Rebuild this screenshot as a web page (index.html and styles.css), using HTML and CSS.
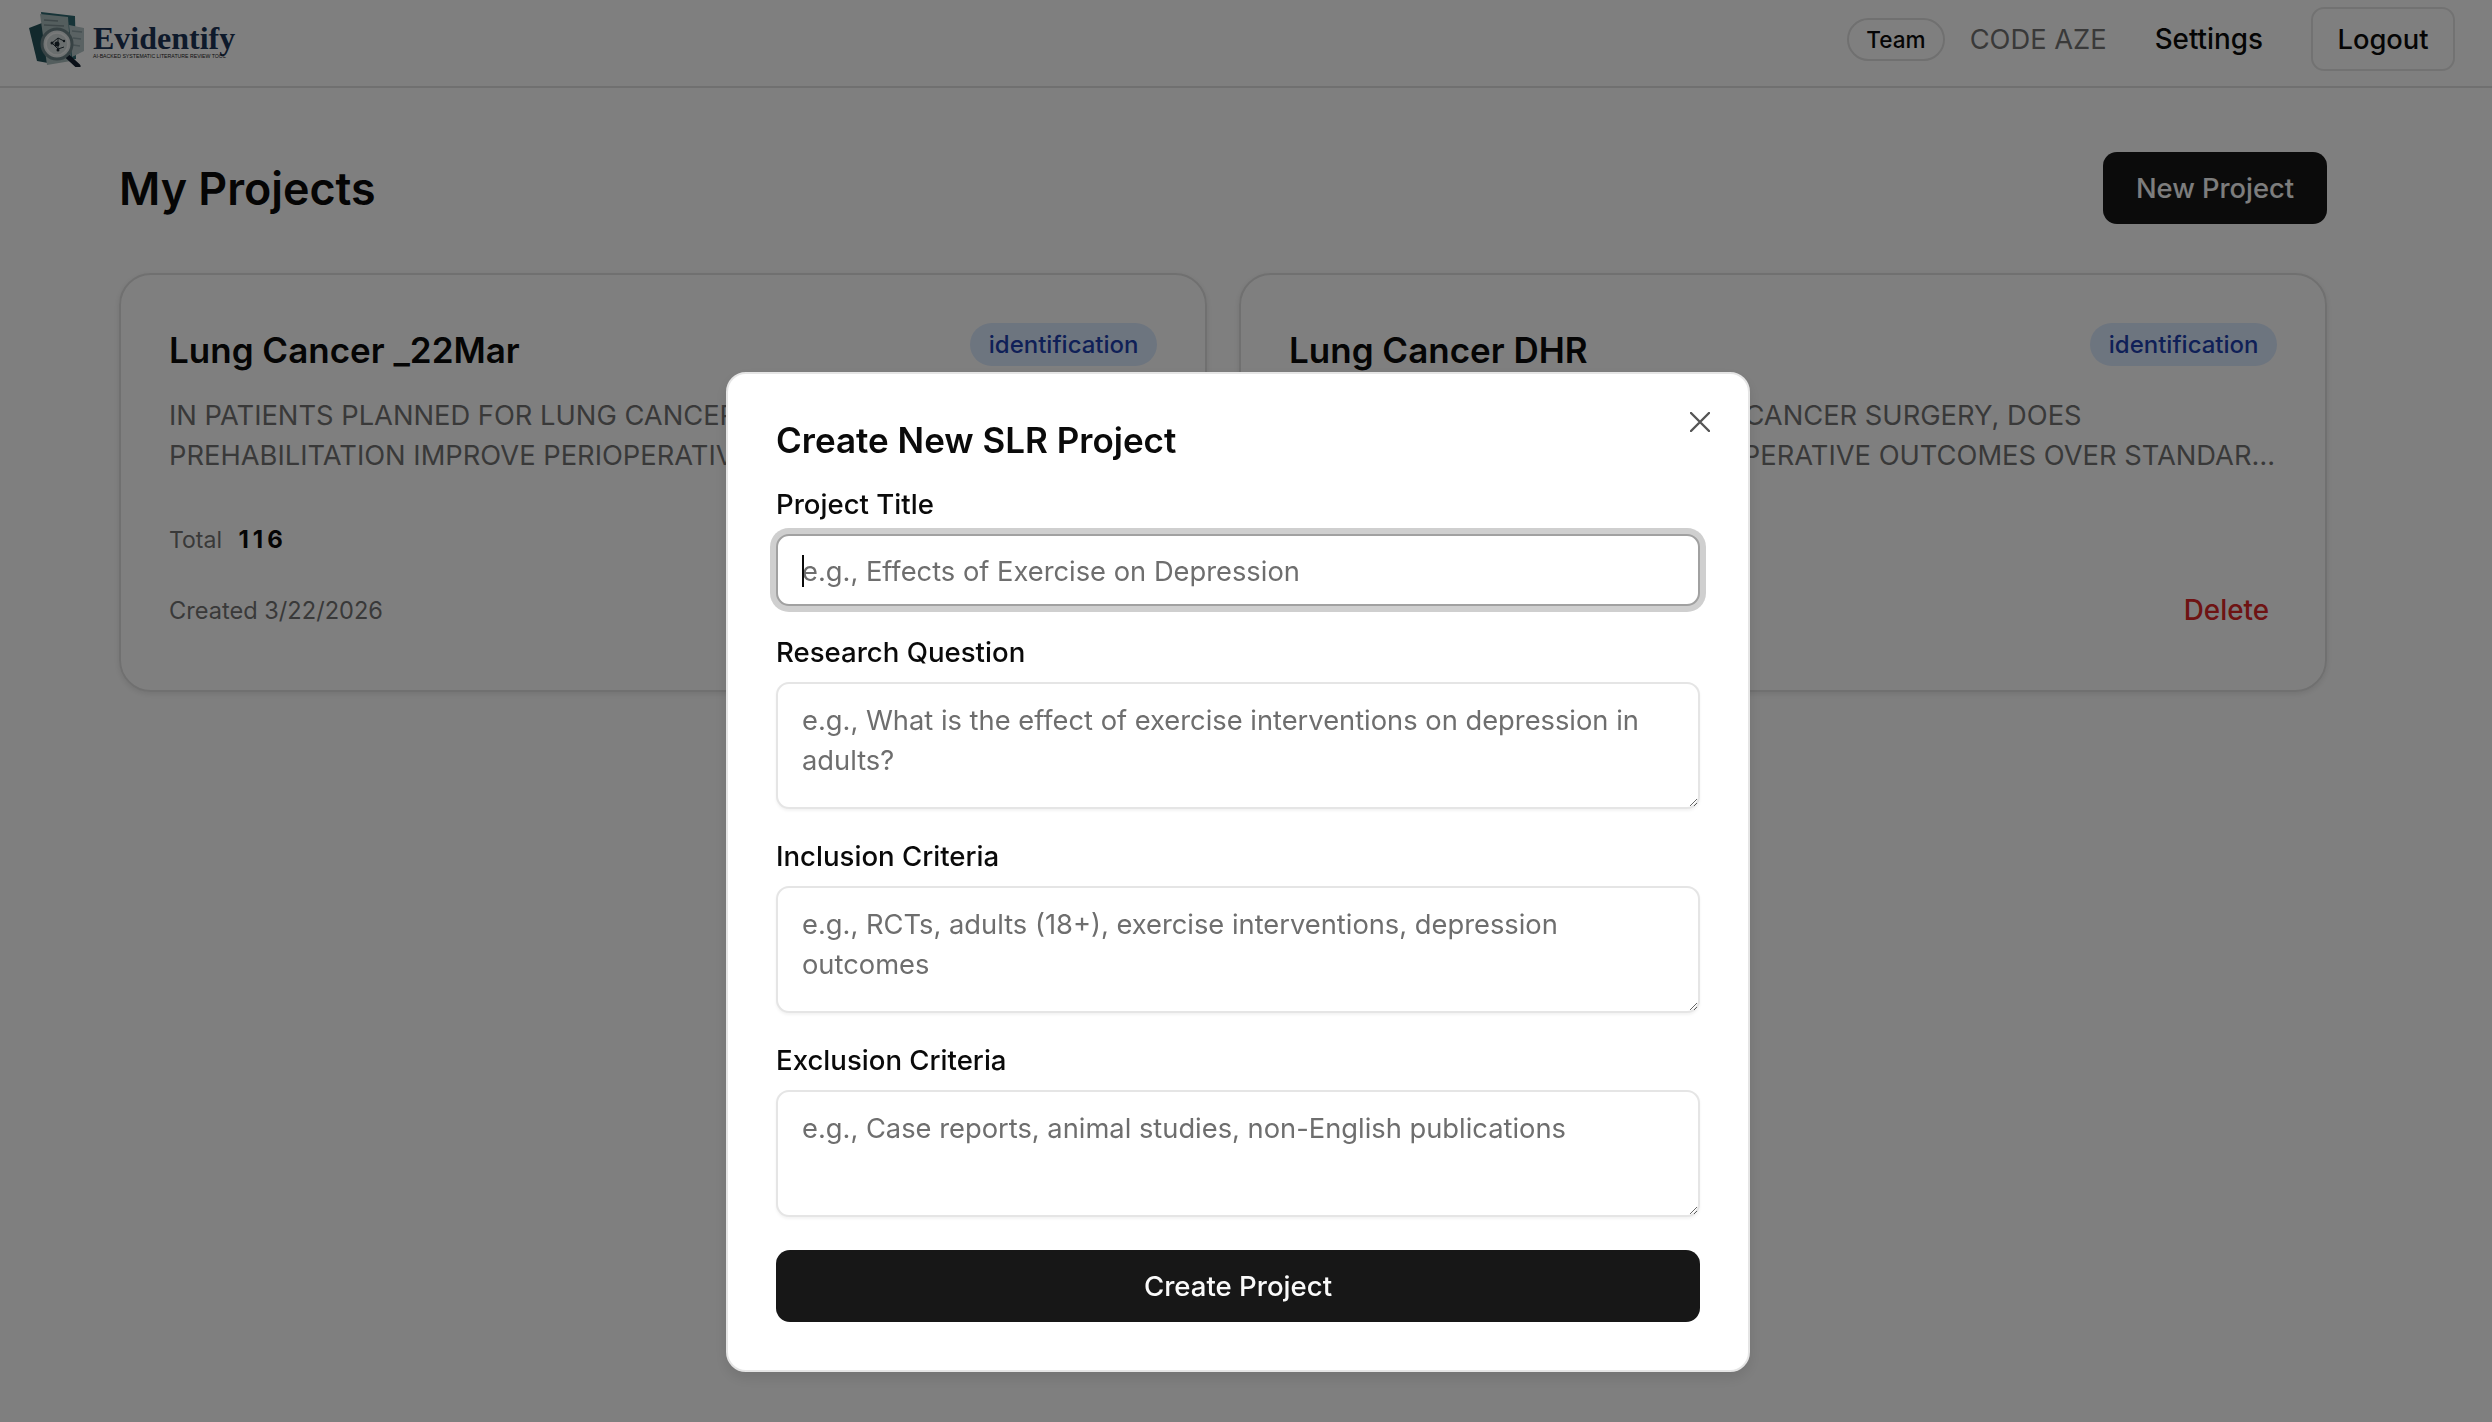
FILE: index.html
```html
<!DOCTYPE html>
<html>
<head>
  <title>Evidentify - My Projects</title>
  <link rel="stylesheet" href="styles.css">
</head>
<body>
  <nav class="navbar">
    <div class="brand">
      <svg class="brand-icon" viewBox="0 0 58 56" width="58" height="56">
        <path d="M1 17 L14 12 L20 52 L9 50 Z" fill="#24535a"/>
        <path d="M13 1 L47 5 L48 48 L20 52 Z" fill="#2f6870"/>
        <path d="M12 3 L40 6 L43 50 L19 54 Z" fill="#a9bcbc"/>
        <path d="M41 14 L56 17 L56 40 L44 46 Z" fill="#b4c4c6"/>
        <path d="M44 20 L54 21 M45 27 L53 28 M45 34 L52 35" stroke="#8a9ea2" stroke-width="1.5"/>
        <path d="M16 9 L30 10 M16 14 L36 15 M17 44 L22 45" stroke="#7c8f92" stroke-width="1.5"/>
        <path d="M38 44 L50 55" stroke="#142030" stroke-width="5" stroke-linecap="round"/>
        <circle cx="29" cy="33" r="15" fill="#e2e8e8" stroke="#6e8488" stroke-width="3"/>
        <circle cx="29" cy="33" r="11" fill="#d4dcdc" stroke="#f2f4f4" stroke-width="1.5"/>
        <path d="M24 32 L30 27 L36 30 M30 27 L30 38 M24 32 L30 38 L36 36" stroke="#26323a" stroke-width="1" fill="none"/>
        <circle cx="29" cy="33" r="2.5" fill="#1d2830"/>
        <circle cx="24" cy="32" r="1.5" fill="#1d2830"/>
        <circle cx="36" cy="30" r="1.2" fill="#1d2830"/>
        <circle cx="30" cy="39" r="1.5" fill="#1d2830"/>
      </svg>
      <div class="brand-text">
        <span class="brand-name">Evidentify</span>
        <span class="brand-tag">AI-BACKED SYSTEMATIC LITERATURE REVIEW TOOL</span>
      </div>
    </div>
    <div class="nav-links">
      <span class="team-pill">Team</span>
      <span class="nav-code">CODE AZE</span>
      <a class="nav-link">Settings</a>
      <button class="logout-btn">Logout</button>
    </div>
  </nav>

  <main class="page">
    <div class="page-head">
      <h1>My Projects</h1>
      <button class="new-btn">New Project</button>
    </div>
    <div class="project-grid">
      <div class="project-card">
        <div class="card-head">
          <h3>Lung Cancer _22Mar</h3>
          <span class="badge">identification</span>
        </div>
        <p class="card-desc">IN PATIENTS PLANNED FOR LUNG CANCER SURGERY, DOES PREHABILITATION IMPROVE PERIOPERATIVE OUTCOMES OVER STANDARD OF CARE AND USUAL PREOPERATIVE MANAGEMENT</p>
        <div class="card-stats">Total <b>116</b></div>
        <div class="card-foot">
          <span>Created 3/22/2026</span>
          <a class="delete-link">Delete</a>
        </div>
      </div>
      <div class="project-card">
        <div class="card-head">
          <h3>Lung Cancer DHR</h3>
          <span class="badge">identification</span>
        </div>
        <p class="card-desc">IN PATIENTS PLANNED FOR LUNG CANCER SURGERY, DOES PREHABILITATION IMPROVE PERIOPERATIVE OUTCOMES OVER STANDARD OF CARE AND USUAL PREOPERATIVE MANAGEMENT</p>
        <div class="card-stats">Total <b>116</b></div>
        <div class="card-foot">
          <span>Created 3/22/2026</span>
          <a class="delete-link">Delete</a>
        </div>
      </div>
    </div>
  </main>

  <div class="overlay">
    <div class="modal">
      <button class="modal-close">
        <svg viewBox="0 0 20 20" width="20" height="20"><path d="M1 1 L19 19 M19 1 L1 19" stroke="#555" stroke-width="2.4" stroke-linecap="round"/></svg>
      </button>
      <h2>Create New SLR Project</h2>
      <label class="field-label">Project Title</label>
      <div class="input-wrap">
        <input class="field-input is-focused" type="text" placeholder="e.g., Effects of Exercise on Depression">
        <span class="caret"></span>
      </div>
      <label class="field-label">Research Question</label>
      <textarea class="field-input field-area" placeholder="e.g., What is the effect of exercise interventions on depression in adults?"></textarea>
      <label class="field-label">Inclusion Criteria</label>
      <textarea class="field-input field-area" placeholder="e.g., RCTs, adults (18+), exercise interventions, depression outcomes"></textarea>
      <label class="field-label">Exclusion Criteria</label>
      <textarea class="field-input field-area field-last" placeholder="e.g., Case reports, animal studies, non-English publications"></textarea>
      <button class="create-btn">Create Project</button>
    </div>
  </div>
</body>
</html>
```

FILE: styles.css
```css
* {
  box-sizing: border-box;
}
html, body {
  height: 100%;
}
body {
  margin: 0;
  overflow: hidden;
  background: #fff;
  color: #0a0a0a;
  font-family: Inter, "Liberation Sans", sans-serif;
  font-size: 27.3px;
}
button {
  font-family: inherit;
}

/* navbar */
.navbar {
  height: 88px;
  padding: 6px 37px 14px 28px;
  display: flex;
  align-items: center;
  justify-content: space-between;
  border-bottom: 2px solid #e0e0e0;
}
.brand {
  display: flex;
  align-items: center;
  gap: 7px;
}
.brand-text {
  display: flex;
  flex-direction: column;
  margin-top: 4px;
}
.brand-name {
  font-family: "Liberation Serif", serif;
  font-weight: bold;
  font-size: 32px;
  line-height: 30px;
  color: #1d3557;
}
.brand-tag {
  font-family: "Liberation Sans", sans-serif;
  font-size: 5.2px;
  line-height: 7px;
  white-space: nowrap;
  color: #222;
}
.nav-links {
  display: flex;
  align-items: center;
}
.team-pill {
  height: 43px;
  padding: 0 17px;
  margin-right: 25px;
  display: flex;
  align-items: center;
  border: 2px solid #e0e0e0;
  border-radius: 22px;
  font-size: 22.6px;
  font-weight: 500;
}
.nav-code {
  color: #737373;
  margin-right: 48px;
}
.nav-link {
  font-size: 27.8px;
  font-weight: 500;
  margin-right: 48px;
}
.logout-btn {
  height: 64px;
  width: 144px;
  background: #fff;
  border: 2px solid #e5e5e5;
  border-radius: 13px;
  font-size: 27.3px;
  font-weight: 500;
  color: #0a0a0a;
}

/* page */
.page {
  padding: 64px 165px 0 119px;
}
.page-head {
  display: flex;
  align-items: center;
  justify-content: space-between;
  height: 72px;
  margin-bottom: 49px;
}
h1 {
  margin: 2px 0 0;
  font-size: 44.8px;
  font-weight: 600;
}
.new-btn {
  height: 72px;
  width: 224px;
  background: #171717;
  color: #fafafa;
  border: none;
  border-radius: 14px;
  font-size: 27.3px;
  font-weight: 500;
}
.project-grid {
  display: grid;
  grid-template-columns: 1fr 1fr;
  gap: 32px;
}
.project-card {
  height: 419px;
  padding: 48px 48px 0;
  border: 2px solid #e0e0e0;
  border-radius: 32px;
  box-shadow: 0 2px 6px rgba(0,0,0,.1);
}
.card-head {
  display: flex;
  justify-content: space-between;
  align-items: flex-start;
  height: 58px;
}
h3 {
  margin: 5px 0 0;
  font-size: 35px;
  font-weight: 600;
  line-height: 44px;
}
.badge {
  height: 43px;
  padding: 0 18.5px;
  display: flex;
  align-items: center;
  background: #dbeafe;
  color: #1e40af;
  border-radius: 22px;
  font-size: 24px;
  font-weight: 500;
}
.card-desc {
  margin: 15px 0 0;
  color: #737373;
  line-height: 40px;
  display: -webkit-box;
  -webkit-line-clamp: 2;
  -webkit-box-orient: vertical;
  overflow: hidden;
}
.card-stats {
  margin-top: 49px;
  height: 36px;
  color: #737373;
  font-size: 23px;
}
.card-stats b {
  color: #0a0a0a;
  margin-left: 10px;
  font-size: 24px;
  letter-spacing: 4px;
}
.card-foot {
  margin-top: 32px;
  display: flex;
  justify-content: space-between;
  align-items: center;
  padding-right: 8px;
  color: #737373;
  font-size: 23.6px;
}
.delete-link {
  color: #dc2626;
  font-size: 27.8px;
  font-weight: 500;
}

/* modal */
.overlay {
  position: fixed;
  inset: 0;
  padding: 372px 0 0 726px;
  background: rgba(0,0,0,.5);
}
.modal {
  position: relative;
  width: 1024px;
  height: 1000px;
  padding: 46px 48px 0;
  background: #fff;
  border: 2px solid #e5e5e5;
  border-radius: 20px;
  box-shadow: 0 6px 14px rgba(0,0,0,.1);
}
.modal-close {
  position: absolute;
  top: 38px;
  right: 38px;
  width: 20px;
  height: 20px;
  padding: 0;
  border: none;
  background: none;
  display: flex;
}
h2 {
  margin: 0 0 26px;
  font-size: 35px;
  line-height: 40px;
  font-weight: 600;
}
.field-label {
  display: block;
  font-size: 27.6px;
  font-weight: 500;
  line-height: 36px;
  margin-bottom: 12px;
}
.input-wrap {
  position: relative;
  margin-bottom: 28px;
}
.field-input {
  display: block;
  width: 100%;
  height: 72px;
  padding: 2px 24px 0;
  border: 2px solid #e5e5e5;
  border-radius: 13px;
  background: #fff;
  font-family: inherit;
  font-size: 27.3px;
  color: #0a0a0a;
  outline: none;
  box-shadow: 0 2px 3px rgba(0,0,0,.05);
}
.field-input::placeholder {
  color: #6e6e6e;
}
.is-focused {
  border-color: #a1a1a1;
  box-shadow: 0 0 0 6px #cfcfcf;
}
.caret {
  position: absolute;
  left: 26px;
  top: 21px;
  width: 2px;
  height: 32px;
  background: #0a0a0a;
}
.field-area {
  height: 127.4px;
  padding: 17px 24px;
  line-height: 40px;
  margin-bottom: 28.4px;
  resize: vertical;
}
.create-btn {
  display: block;
  width: 100%;
  height: 72px;
  margin-top: 33px;
  background: #171717;
  color: #fafafa;
  border: none;
  border-radius: 14px;
  font-size: 27.6px;
  font-weight: 500;
}
```
